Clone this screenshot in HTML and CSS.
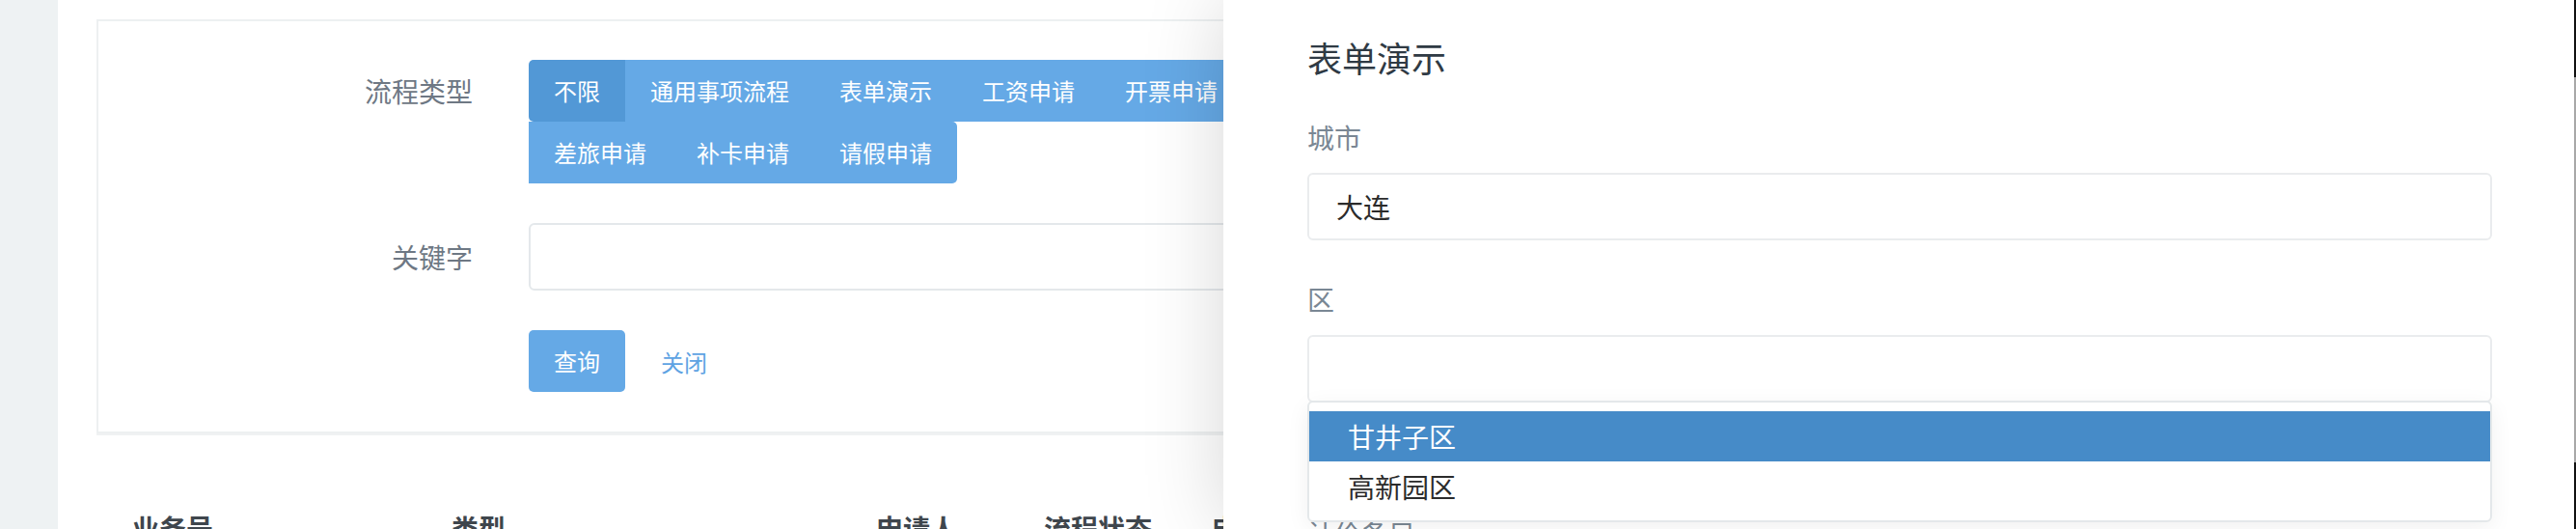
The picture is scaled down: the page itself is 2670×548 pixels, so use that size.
FILE: index.html
```html
<!DOCTYPE html>
<html lang="zh-CN">
<head>
<meta charset="utf-8">
<title>表单演示</title>
<link rel="stylesheet" href="styles.css">
</head>
<body>
<div class="app">
  <aside class="sidebar"></aside>
  <main class="main">
    <section class="card">
      <div class="form-row">
        <div class="form-label label-top">流程类型</div>
        <div class="btn-group">
          <span class="btn active">不限</span>
          <span class="btn">通用事项流程</span>
          <span class="btn">表单演示</span>
          <span class="btn">工资申请</span>
          <span class="btn">开票申请</span>
          <span class="btn">差旅申请</span>
          <span class="btn">补卡申请</span>
          <span class="btn">请假申请</span>
        </div>
      </div>
      <div class="form-row row-center">
        <div class="form-label">关键字</div>
        <div class="text-input keyword"></div>
      </div>
      <div class="form-row">
        <div class="form-label"></div>
        <div class="actions">
          <span class="btn btn-solo">查询</span>
          <span class="link">关闭</span>
        </div>
      </div>
    </section>
    <div class="table-head">
      <span>业务号</span>
      <span>类型</span>
      <span>申请人</span>
      <span>流程状态</span>
      <span>申请时间</span>
    </div>
  </main>

  <div class="drawer">
    <div class="drawer-panel">
      <h2 class="drawer-title">表单演示</h2>
      <div class="field">
        <div class="field-label">城市</div>
        <div class="field-input">大连</div>
      </div>
      <div class="field">
        <div class="field-label">区</div>
        <div class="select-wrap">
          <div class="field-input"></div>
          <ul class="dropdown">
            <li class="option selected">甘井子区</li>
            <li class="option">高新园区</li>
          </ul>
        </div>
      </div>
      <div class="field field-next">
        <div class="field-label">计价条目</div>
      </div>
    </div>
    <div class="edge"></div>
  </div>
</div>
</body>
</html>
```

FILE: styles.css
```css
* { box-sizing: border-box; }

html, body {
  margin: 0;
  padding: 0;
  width: 2670px;
  height: 548px;
  overflow: hidden;
  background: #ffffff;
  font-family: "Noto Sans CJK SC", "Noto Sans", sans-serif;
}

.app {
  position: relative;
  display: flex;
  width: 2670px;
  height: 548px;
  overflow: hidden;
}

.sidebar {
  width: 60px;
  flex: none;
  background: #eef2f3;
}

.main {
  flex: 1;
  padding: 20px 0 0 40px;
  background: #ffffff;
}

.card {
  width: 1900px;
  border: 2px solid #edf0f1;
  box-shadow: 0 2px 0 #f0f2f3;
  padding: 40px 0 41px;
  background: #fff;
}

.form-row {
  display: flex;
  gap: 58px;
  margin-top: 41px;
}
.form-row:first-child { margin-top: 0; }
.row-center { align-items: center; }

.form-label {
  width: 388px;
  flex: none;
  text-align: right;
  font-size: 28px;
  line-height: 42px;
  color: #6e7884;
}
.label-top { line-height: 64px; }

.btn-group {
  display: flex;
  flex-wrap: wrap;
  width: 800px;
}

.btn {
  display: block;
  height: 64px;
  line-height: 64px;
  padding: 0 26px;
  font-size: 24px;
  color: #ffffff;
  background: #65a9e6;
  white-space: nowrap;
}
.btn-group .btn:first-child { border-radius: 5px 0 0 5px; }
.btn-group .btn:last-child { border-radius: 0 5px 5px 0; }
.btn.active { background: #5298d6; }
.btn-solo { border-radius: 5px; }

.text-input {
  height: 70px;
  border: 2px solid #e4e8eb;
  border-radius: 6px;
  background: #fff;
}
.keyword { width: 1200px; }

.actions {
  display: flex;
  align-items: center;
  gap: 37px;
}
.link {
  font-size: 24px;
  color: #5ea3e3;
}

.table-head {
  display: grid;
  grid-template-columns: 331px 440px 174px 174px 300px;
  padding-left: 37px;
  margin-top: 77px;
  font-size: 28px;
  line-height: 42px;
  font-weight: 700;
  color: #3f464d;
}

/* drawer overlay */
.drawer {
  position: absolute;
  top: 0;
  right: 0;
  width: 1402px;
  height: 548px;
  display: flex;
}

.drawer-panel {
  flex: 1;
  background: #ffffff;
  padding: 32px 85px 0 87px;
  box-shadow: 0 0 80px rgba(0, 0, 0, 0.16);
}

.edge {
  width: 2px;
  flex: none;
  background: linear-gradient(#111 0, #111 80px, #a8a8a8 80px, #a8a8a8 479px, #111 479px);
}

.drawer-title {
  margin: 0;
  font-size: 36px;
  line-height: 54px;
  font-weight: 400;
  color: #2f3a44;
}

.field { margin-top: 35px; }
.field + .field { margin-top: 40px; }

.field-label {
  font-size: 28px;
  line-height: 42px;
  color: #7a8794;
  margin-bottom: 16px;
}

.field-input {
  height: 70px;
  border: 2px solid #eaecee;
  border-radius: 6px;
  padding-left: 28px;
  font-size: 28px;
  line-height: 66px;
  color: #2b2b2b;
  background: #fff;
}

.select-wrap { position: relative; }

.dropdown {
  position: absolute;
  left: 0;
  right: 0;
  top: 68px;
  margin: 0;
  padding: 9px 0;
  list-style: none;
  background: #ffffff;
  border: 2px solid #e4e8ea;
  border-radius: 6px;
  box-shadow: 0 6px 24px rgba(0, 0, 0, 0.06);
  z-index: 2;
}

.option {
  height: 52px;
  line-height: 52px;
  padding-left: 40px;
  font-size: 28px;
  color: #2b2b2b;
}
.option.selected {
  background: #468bc8;
  color: #ffffff;
}

.field + .field-next { margin-top: 114px; }
```
